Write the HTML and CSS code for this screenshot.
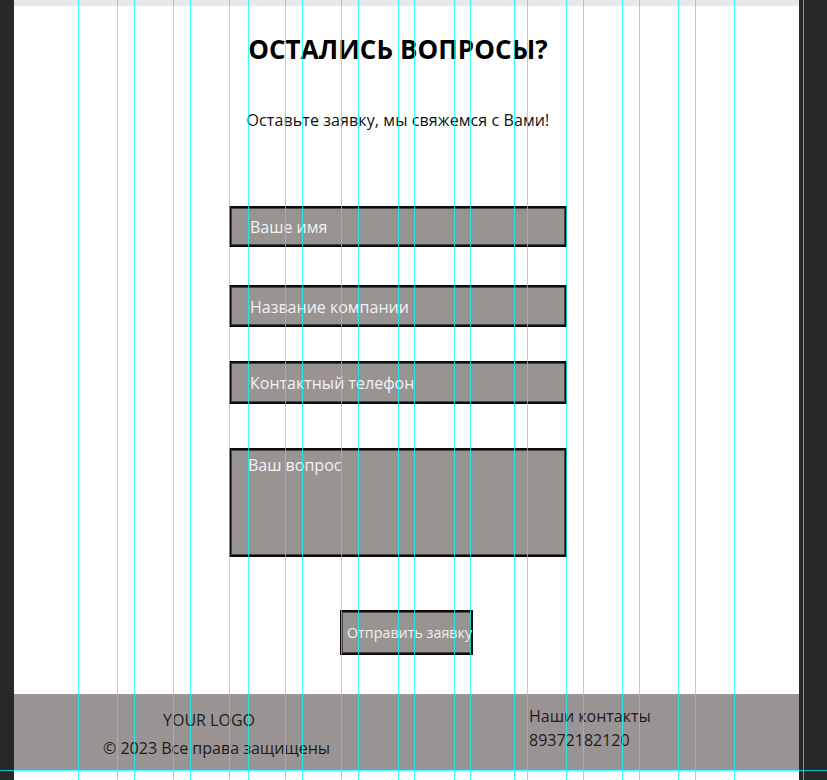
FILE: index.html
```html
<!DOCTYPE html>
<html lang="ru">
<head>
<meta charset="utf-8">
<title>Остались вопросы?</title>
<link rel="stylesheet" href="styles.css">
</head>
<body>
<div class="canvas">
  <div class="topband"></div>
  <section class="content">
    <h1 class="title">ОСТАЛИСЬ ВОПРОСЫ?</h1>
    <p class="subtitle">Оставьте заявку, мы свяжемся с Вами!</p>
    <form class="form">
      <div class="field field-1">Ваше имя</div>
      <div class="field field-2">Название компании</div>
      <div class="field field-3">Контактный телефон</div>
      <div class="field field-area">Ваш вопрос</div>
      <div class="button">Отправить заявку</div>
    </form>
  </section>
  <footer class="footer">
    <div class="foot-left">
      <div class="logo">YOUR LOGO</div>
      <div class="copy">© 2023 Все права защищены</div>
    </div>
    <div class="foot-right">
      <div class="contacts">Наши контакты</div>
      <div class="phone">89372182120</div>
    </div>
  </footer>
</div>
<div class="guides">
  <span class="guide" style="left:78px"></span>
  <span class="guide" style="left:117px"></span>
  <span class="guide" style="left:134px"></span>
  <span class="guide" style="left:173px"></span>
  <span class="guide" style="left:190px"></span>
  <span class="guide" style="left:229px"></span>
  <span class="guide" style="left:248px"></span>
  <span class="guide" style="left:285px"></span>
  <span class="guide" style="left:302px"></span>
  <span class="guide" style="left:341px"></span>
  <span class="guide" style="left:358px"></span>
  <span class="guide" style="left:398px"></span>
  <span class="guide" style="left:414px"></span>
  <span class="guide" style="left:454px"></span>
  <span class="guide" style="left:470px"></span>
  <span class="guide" style="left:514px"></span>
  <span class="guide" style="left:527px"></span>
  <span class="guide" style="left:566px"></span>
  <span class="guide" style="left:583px"></span>
  <span class="guide" style="left:622px"></span>
  <span class="guide" style="left:639px"></span>
  <span class="guide" style="left:678px"></span>
  <span class="guide" style="left:695px"></span>
  <span class="guide" style="left:734px"></span>
  <span class="guide" style="left:803px"></span>
  <span class="hguide" style="top:770px"></span>
</div>
</body>
</html>
```
FILE: styles.css
```css
* { box-sizing: border-box; }
html, body {
  margin: 0;
  padding: 0;
}
body {
  width: 827px;
  height: 780px;
  overflow: hidden;
  background: #282828;
  font-family: "Open Sans", "Noto Sans", sans-serif;
  position: relative;
}
.canvas {
  margin-left: 14px;
  width: 785px;
  height: 780px;
  background: #ffffff;
  display: flex;
  flex-direction: column;
}
.topband {
  height: 6px;
  background: #e7e7e7;
  flex: none;
}
.content {
  margin-left: 215px;
  width: 338px;
  display: flex;
  flex-direction: column;
  align-items: center;
}
.title {
  margin: 27px 0 0;
  font-size: 26px;
  line-height: 32px;
  font-weight: 700;
  color: #000;
  white-space: nowrap;
  letter-spacing: 0.1px;
}
.subtitle {
  margin: 45px 0 0;
  font-size: 16px;
  line-height: 20px;
  color: #111;
  white-space: nowrap;
  letter-spacing: 0.1px;
}
.form {
  margin: 76px 0 0;
  width: 338px;
  display: flex;
  flex-direction: column;
}
.field {
  border: 2px solid #0c0c0c;
  box-shadow: inset 0 0 0 1px #4a4747;
  background: #999392;
  color: #f2f2f2;
  font-size: 16px;
  line-height: 20px;
  padding-left: 19px;
  padding-top: 1px;
  display: flex;
  align-items: center;
  white-space: nowrap;
}
.field-1 { height: 41px; }
.field-2 { height: 42px; margin-top: 38px; }
.field-3 { height: 43px; margin-top: 34px; }
.field-area {
  height: 109px;
  margin-top: 44px;
  align-items: flex-start;
  padding-top: 5px;
  padding-left: 17px;
}
.button {
  margin-top: 53px;
  margin-left: 111px;
  width: 133px;
  height: 45px;
  border: 2px solid #0c0c0c;
  box-shadow: inset 0 0 0 1px #4a4747;
  background: #999392;
  color: #f0f0f0;
  font-size: 14.3px;
  line-height: 20px;
  padding-left: 5px;
  display: flex;
  align-items: center;
  white-space: nowrap;
}
.footer {
  margin-top: 39px;
  height: 76px;
  flex: none;
  background: #9a9494;
  display: flex;
  color: #1c1c1c;
  font-size: 16px;
  line-height: 24px;
}
.foot-left {
  width: 515px;
  padding-left: 89px;
  padding-top: 14px;
  display: flex;
  flex-direction: column;
  align-items: flex-start;
}
.logo {
  margin-left: 60px;
  margin-bottom: 4px;
}
.foot-right {
  padding-top: 10px;
  display: flex;
  flex-direction: column;
}
.guides {
  position: absolute;
  left: 0;
  top: 0;
  width: 827px;
  height: 780px;
  pointer-events: none;
}
.guide {
  position: absolute;
  top: 0;
  width: 1px;
  height: 780px;
  background: rgba(0, 255, 255, 0.75);
}
.hguide {
  position: absolute;
  left: 0;
  width: 827px;
  height: 1px;
  background: rgba(0, 255, 255, 0.75);
}
```
